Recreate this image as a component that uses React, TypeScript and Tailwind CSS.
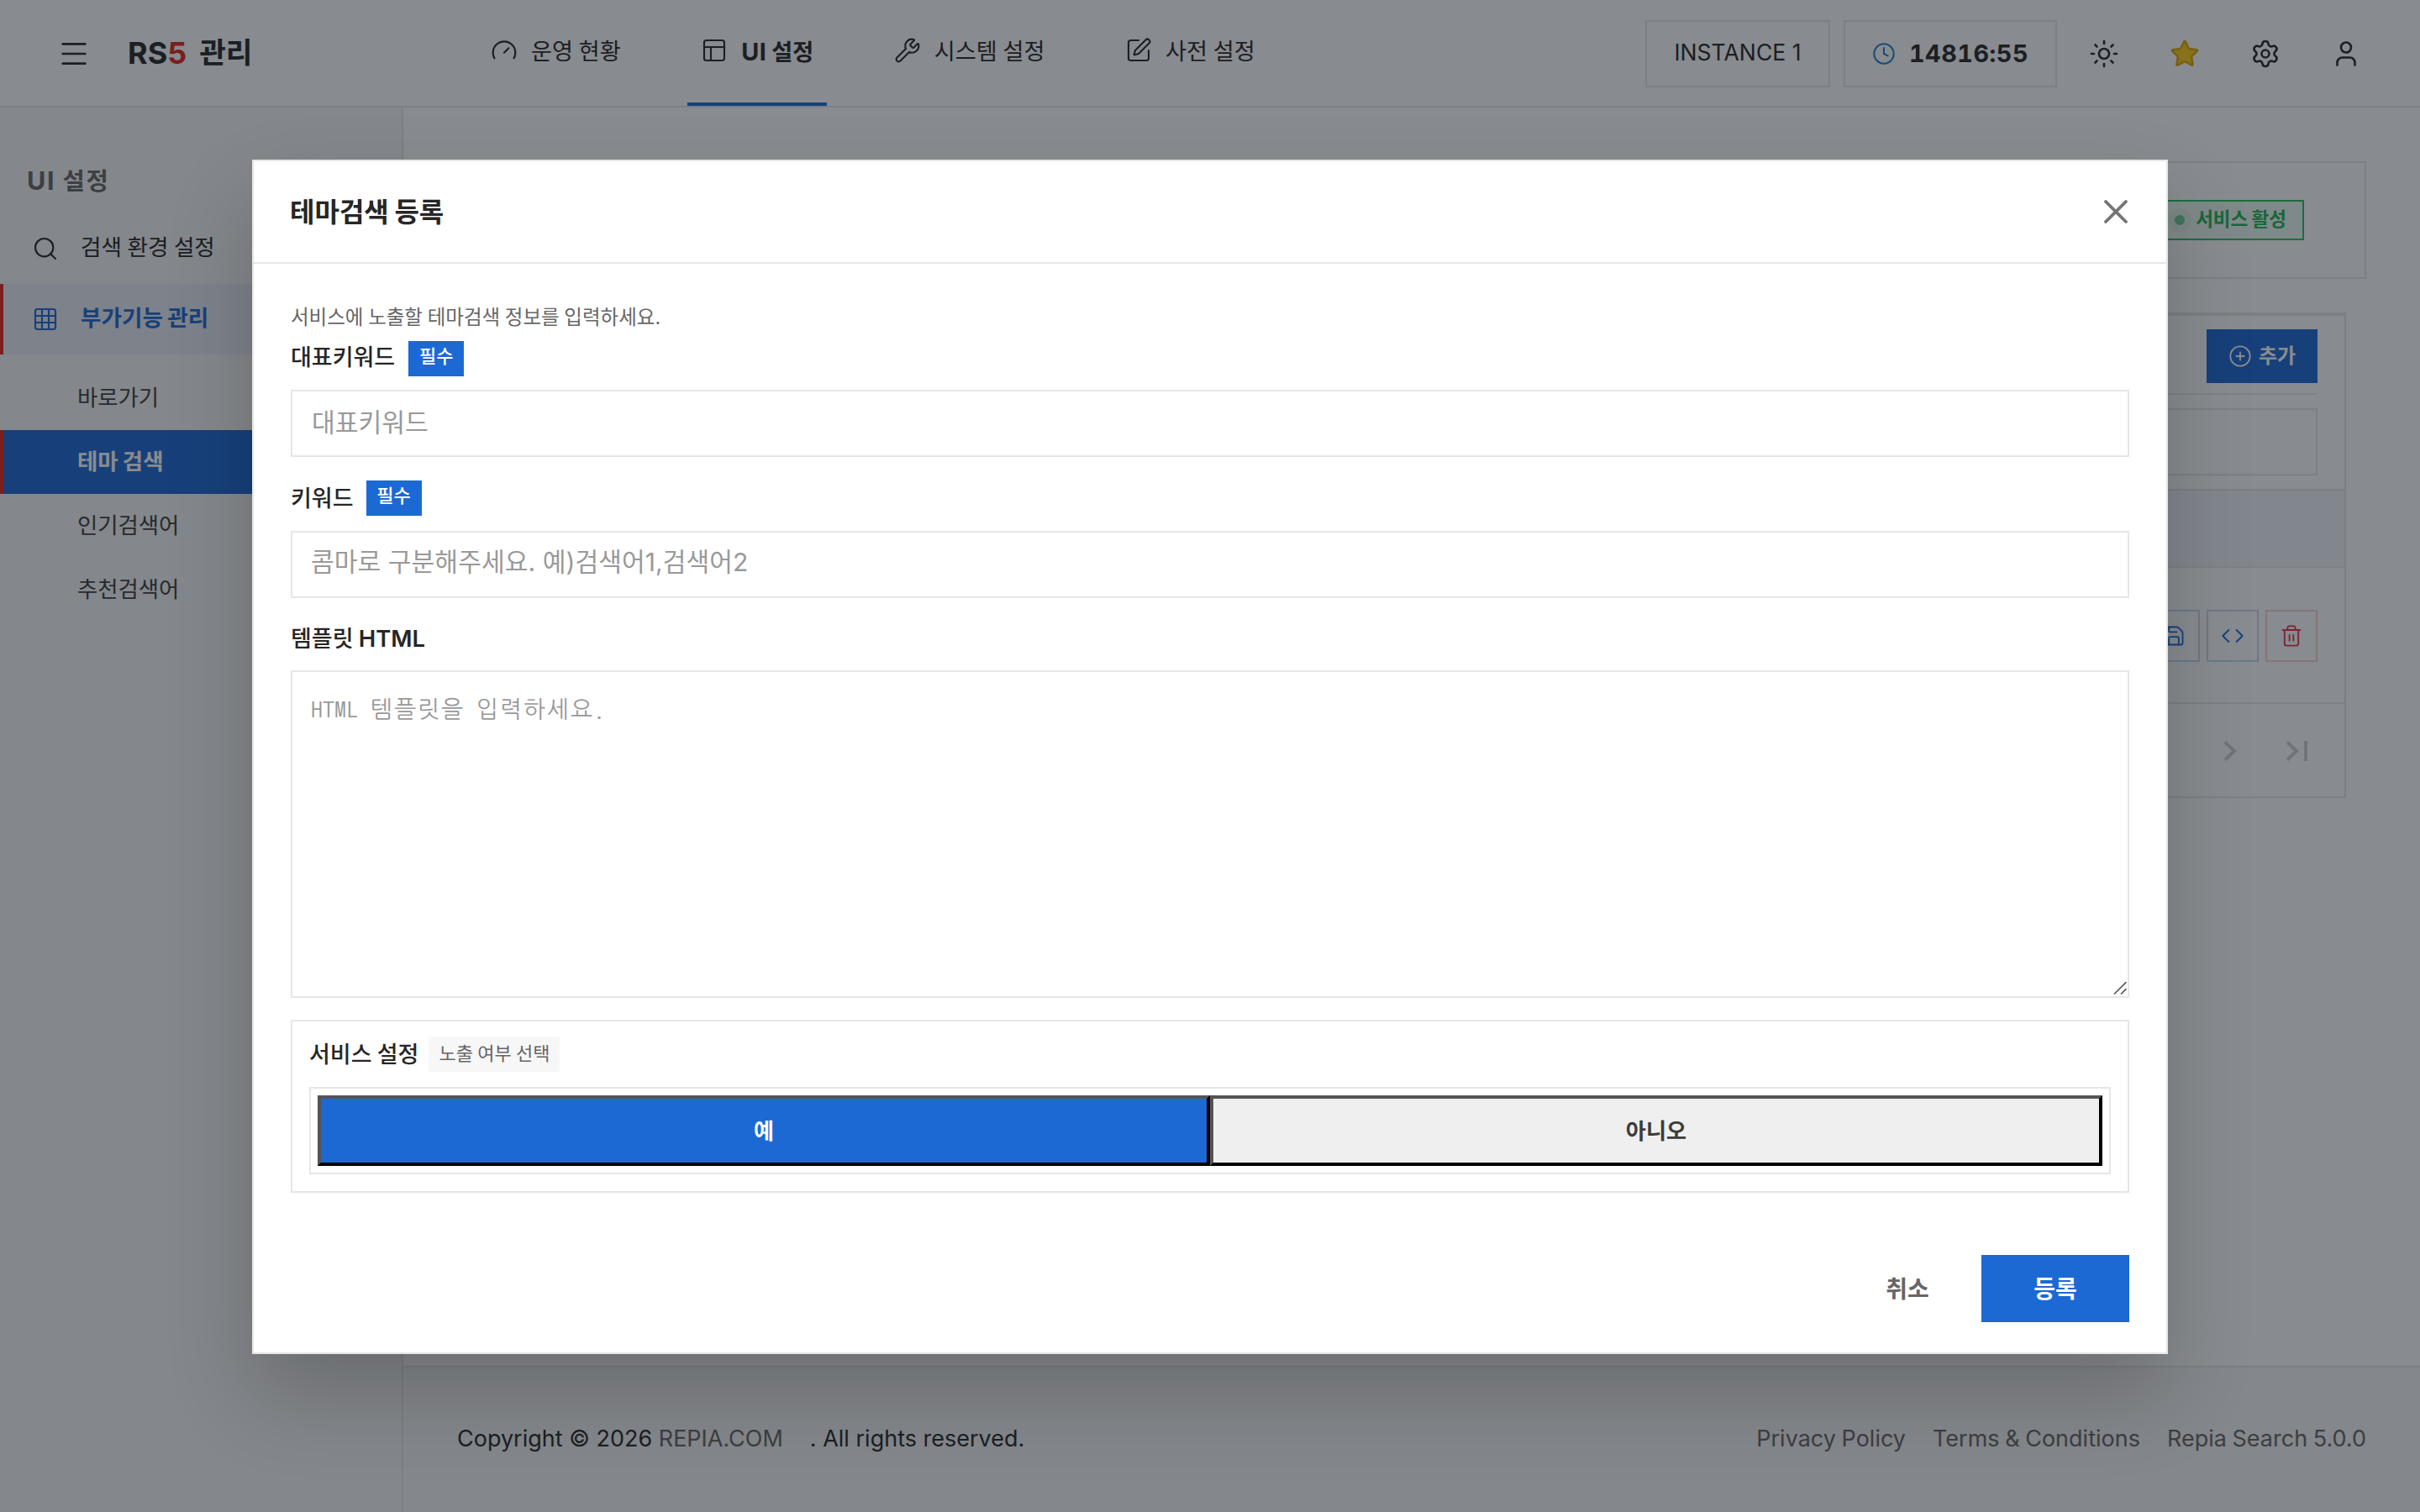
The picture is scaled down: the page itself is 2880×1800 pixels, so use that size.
import { useState } from "react";
import type { ReactNode } from "react";
import {
    CirclePlus,
    Clock,
    Code,
    Gauge,
    Grid3X3,
    Menu,
    PanelsTopLeft,
    Save,
    Search,
    Settings,
    SquarePen,
    Star,
    Sun,
    Trash2,
    User,
    Wrench,
    X,
} from "lucide-react";

const subMenus = ["바로가기", "테마 검색", "인기검색어", "추천검색어"];

function NavItem({ icon, active, children }: { icon: ReactNode; active?: boolean; children: ReactNode }) {
    return (
        <a
            href="#"
            className={`flex items-center gap-4 px-4 h-[126px] pb-0.5 border-b-4 ${
                active ? "border-[#1c69d4] font-bold" : "border-transparent"
            }`}
        >
            {icon}
            <span className="text-[27.2px] leading-10 whitespace-nowrap mt-1">{children}</span>
        </a>
    );
}

function IconButton({ children }: { children: ReactNode }) {
    return <button className="flex items-center justify-center w-20 h-20">{children}</button>;
}

function Header() {
    return (
        <header className="flex items-start h-32 pr-12 border-b-2 border-[#e6e6e6] bg-white">
            <button className="ml-12 mt-6 w-20 h-20 flex items-center justify-center">
                <Menu size={40} strokeWidth={1.6} />
            </button>
            <h1 className="ml-6 w-[416px] h-[126px] flex items-center gap-[15px] text-[36px] font-bold">
                <span>
                    RS<span className="text-[#e22718]">5</span>
                </span>
                <span className="text-[34.4px]">관리</span>
            </h1>
            <nav className="flex gap-[63.5px]">
                <NavItem icon={<Gauge size={32} strokeWidth={1.6} />}>운영 현황</NavItem>
                <NavItem active icon={<PanelsTopLeft size={32} strokeWidth={1.6} />}>
                    <span className="text-[28.8px] tracking-[0.3px]">UI </span>설정
                </NavItem>
                <NavItem icon={<Wrench size={32} strokeWidth={1.6} />}>시스템 설정</NavItem>
                <NavItem icon={<SquarePen size={32} strokeWidth={1.6} />}>사전 설정</NavItem>
            </nav>
            <div className="ml-auto mt-6 flex gap-4">
                <div className="w-[220px] h-20 flex items-center justify-center pb-0.5 border-2 border-[#e6e6e6] text-[26.6px] [word-spacing:0]">
                    INSTANCE 1
                </div>
                <div className="w-[254px] h-20 flex items-center pl-8 gap-4 border-2 border-[#e6e6e6]">
                    <Clock size={28} strokeWidth={1.75} className="text-[#1c82cc]" />
                    <span className="text-[28.8px] font-bold tracking-[0.5px] tabular-nums">14816:55</span>
                </div>
                <IconButton>
                    <Sun size={36} strokeWidth={1.75} />
                </IconButton>
                <IconButton>
                    <Star size={36} strokeWidth={1.75} className="text-[#e2a50c] fill-[#facc15]" />
                </IconButton>
                <IconButton>
                    <Settings size={36} strokeWidth={1.75} />
                </IconButton>
                <IconButton>
                    <User size={36} strokeWidth={1.75} />
                </IconButton>
            </div>
        </header>
    );
}

function Sidebar() {
    return (
        <aside className="w-[480px] shrink-0 border-r-2 border-[#e6e6e6] bg-[#f7f7f7] pt-[66px]">
            <h2 className="h-[60px] pl-8 text-[28.6px] leading-[42px] font-bold tracking-[1.8px] text-[#666]">
                <span className="text-[30.4px]">UI </span>설정
            </h2>
            <a href="#" className="flex items-center h-[84px] pl-[38px] gap-[26px] text-[26.6px]">
                <Search size={32} strokeWidth={1.6} />
                <span className="-mt-0.5">검색 환경 설정</span>
            </a>
            <a
                href="#"
                className="flex items-center h-[84px] pl-[34px] gap-[26px] text-[26.6px] font-bold border-l-4 border-[#e22718] bg-[#e9ecf6] text-[#1c69d4]"
            >
                <Grid3X3 size={32} strokeWidth={1.6} />
                <span className="-mt-0.5">부가기능 관리</span>
            </a>
            <ul className="pt-3.5 text-[26.4px]">
                {subMenus.map((menu) => (
                    <li
                        key={menu}
                        className={`flex items-center h-[76px] pl-[88px] pb-px border-l-4 ${
                            menu === "테마 검색"
                                ? "border-[#e22718] bg-[#1c69d4] text-white font-bold"
                                : "border-transparent text-[#3c3c3c]"
                        }`}
                    >
                        {menu}
                    </li>
                ))}
            </ul>
        </aside>
    );
}

function Content() {
    return (
        <main className="flex-1 px-16 pt-16">
            <section className="h-[140px] flex items-center justify-end pr-[72px] border-2 border-[#e6e6e6] bg-white">
                <div className="h-12 flex items-center gap-[13px] pl-5 pr-[19px] border-2 border-[#22c55e] bg-[#eefaf2] text-[#22b455]">
                    <span className="w-3 h-3 rounded-full bg-[#6fcf97] shadow-[0_0_0_8px_rgba(34,197,94,0.06)]"></span>
                    <span className="text-[22.5px] font-bold -mt-0.5">서비스 활성</span>
                </div>
            </section>
            <section className="mt-10 mr-6 border-2 border-[#e6e6e6] bg-white">
                <div className="border-t-2 border-[#e6e6e6] px-8 pt-4">
                    <div className="flex justify-end pb-3 border-b-2 border-[#ececec]">
                        <button className="w-[132px] h-16 flex items-center justify-center gap-2 bg-[#1c69d4] text-white text-[24px] font-bold">
                            <CirclePlus size={28} strokeWidth={1.6} />
                            <span>추가</span>
                        </button>
                    </div>
                    <div className="mt-4 mb-4 h-20 border-2 border-[#e6e6e6]"></div>
                </div>
                <div className="h-[94px] border-y-2 border-[#e6e6e6] bg-[#f3f5fb]"></div>
                <div className="h-[162px] pt-0.5 flex items-center justify-end gap-2 pr-8 border-b-2 border-[#e6e6e6]">
                    <button className="w-[62px] h-[62px] flex items-center justify-center border-2 border-[#c6d9f4] text-[#1c69d4]">
                        <Save size={28} strokeWidth={1.6} />
                    </button>
                    <button className="w-[62px] h-[62px] flex items-center justify-center border-2 border-[#c6d9f4] text-[#1c69d4]">
                        <Code size={28} strokeWidth={1.6} />
                    </button>
                    <button className="w-[62px] h-[62px] flex items-center justify-center border-2 border-[#f6d0d3] text-[#dc3545]">
                        <Trash2 size={28} strokeWidth={1.6} />
                    </button>
                </div>
                <div className="h-[110px] pt-0.5 flex items-center justify-end gap-[58px] pr-[43px] text-[#cfcfcf]">
                    <svg width="16" height="24" viewBox="0 0 16 24" fill="none" stroke="currentColor" strokeWidth="4">
                        <path d="M2 1.5 13 12 2 22.5" />
                    </svg>
                    <svg width="27" height="24" viewBox="0 0 27 24" fill="none" stroke="currentColor" strokeWidth="4">
                        <path d="M2 1.5 13 12 2 22.5M24 0v24" />
                    </svg>
                </div>
            </section>
        </main>
    );
}

function Footer() {
    return (
        <footer className="h-[174px] px-16 pb-0.5 flex items-center justify-between border-t-2 border-[#e6e6e6] bg-[#f7f7f7] text-[27px]">
            <p className="[word-spacing:0]">
                Copyright © 2026 <span className="text-[#666] mr-8">REPIA.COM</span>. All rights reserved.
            </p>
            <div className="flex gap-8 text-[#666]">
                <a href="#">Privacy Policy</a>
                <a href="#">Terms &amp; Conditions</a>
                <span>Repia Search 5.0.0</span>
            </div>
        </footer>
    );
}

function Required() {
    return (
        <span className="flex items-center justify-center w-[66px] h-[42px] pb-[5px] bg-[#1c69d4] text-white text-[22px] font-medium">
            필수
        </span>
    );
}

function ThemeModal() {
    const [visible, setVisible] = useState(true);

    return (
        <div className="w-[2280px] h-[1422px] flex flex-col border-2 border-[#e6e6e6] bg-white shadow-[0_48px_96px_rgba(0,0,0,0.2)]">
            <div className="h-[122px] shrink-0 flex items-center justify-between pl-[43px] pr-9 border-b-2 border-[#e6e6e6]">
                <h3 className="text-[32px] font-bold mt-0.5">테마검색 등록</h3>
                <button className="text-[#757575]">
                    <X size={48} strokeWidth={1.9} />
                </button>
            </div>

            <div className="px-11 pt-[42px]">
                <p className="h-[50px] text-[23.5px] leading-[44px] text-[#666]">서비스에 노출할 테마검색 정보를 입력하세요.</p>

                <div className="flex items-center gap-4 h-[42px] text-[27px] font-medium">
                    <label className="-mt-px">대표키워드</label>
                    <Required />
                </div>
                <input
                    className="block mt-4 w-full h-20 px-[23px] pb-[3px] border-2 border-[#e6e6e6] text-[30.2px] placeholder:text-[#999]"
                    placeholder="대표키워드"
                />

                <div className="flex items-center gap-[15px] h-[42px] mt-7 text-[27px] font-medium">
                    <label className="mt-[3px]">키워드</label>
                    <Required />
                </div>
                <input
                    className="block mt-[18px] w-full h-20 px-[22px] pb-1.5 border-2 border-[#e6e6e6] text-[30.2px] placeholder:text-[#999]"
                    placeholder="콤마로 구분해주세요. 예)검색어1,검색어2"
                />

                <label className="block mt-7 h-[42px] text-[27px] leading-[41px] font-medium">
                    템플릿 <span className="text-[27.4px] font-semibold">HTML</span>
                </label>
                <div className="relative mt-4">
                    <textarea
                        className="block w-full h-[390px] px-[22px] py-[23px] resize-none border-2 border-[#e6e6e6] text-[28px] leading-[45px] [word-spacing:0] placeholder:text-[#999] font-[NanumGothicCoding,'Noto_Sans_CJK_KR',monospace]"
                        placeholder="HTML 템플릿을 입력하세요."
                    />
                    <svg className="absolute right-[3px] bottom-1 w-4 h-4" viewBox="0 0 16 16" stroke="#555" strokeWidth="1.6">
                        <path d="M1 15.5 15.5 1M9 15.5l6.5-6.5" />
                    </svg>
                </div>

                <div className="mt-[26px] h-[206px] px-5 pt-[18px] border-2 border-[#e6e6e6]">
                    <div className="flex items-center gap-3 h-[42px]">
                        <span className="text-[27px] font-medium mt-0.5">서비스 설정</span>
                        <span className="flex items-center justify-center w-[156px] h-[42px] pb-0.5 bg-[#f7f7f7] text-[22px] text-[#666]">
                            노출 여부 선택
                        </span>
                    </div>
                    <div className="mt-[18px] p-2 flex h-[104px] border-2 border-[#e6e6e6] text-[26.2px] font-bold">
                        <button
                            onClick={() => setVisible(true)}
                            className={`flex-1 pt-0.5 border-4 border-black [border-style:outset] ${
                                visible ? "bg-[#1c69d4] text-white" : "bg-[#efefef] text-[#3c3c3c]"
                            }`}
                        >
                            예
                        </button>
                        <button
                            onClick={() => setVisible(false)}
                            className={`flex-1 pt-0.5 border-4 border-black [border-style:outset] ${
                                visible ? "bg-[#efefef] text-[#3c3c3c]" : "bg-[#1c69d4] text-white"
                            }`}
                        >
                            아니오
                        </button>
                    </div>
                </div>
            </div>

            <div className="mt-auto mb-9 px-11 flex justify-end gap-4 text-[28px] font-bold">
                <button className="w-36 h-20 pt-px text-[#666]">취소</button>
                <button className="w-44 h-20 pt-px bg-[#1c69d4] text-white">등록</button>
            </div>
        </div>
    );
}

export default function App() {
    return (
        <div className="relative w-[2880px] h-[1800px] overflow-hidden flex flex-col bg-white text-[#262626] [word-spacing:-0.06em] font-['Inter','Noto_Sans_CJK_KR',sans-serif]">
            <Header />
            <div className="flex flex-1">
                <Sidebar />
                <div className="flex-1 flex flex-col">
                    <Content />
                    <Footer />
                </div>
            </div>
            <div className="absolute inset-0 flex justify-center pt-[190px] items-start bg-[rgba(17,23,31,0.5)]">
                <ThemeModal />
            </div>
        </div>
    );
}
